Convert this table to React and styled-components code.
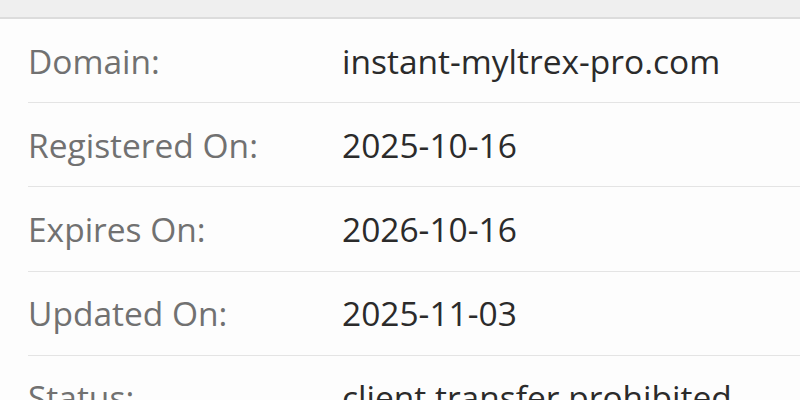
import React from "react";
import styled, { createGlobalStyle } from "styled-components";

const GlobalStyle = createGlobalStyle`
  html, body {
    margin: 0;
    padding: 0;
    background: #fdfdfd;
  }
  body {
    font-family: "Open Sans", "Noto Sans", sans-serif;
  }
`;

const Page = styled.div`
  width: 800px;
  height: 400px;
  overflow: hidden;
  background: #fdfdfd;
`;

const TopBar = styled.div`
  height: 17px;
  background: #efefef;
  border-bottom: 2px solid #dcdcdc;
`;

const Table = styled.div`
  padding-left: 28px;
  display: flex;
  flex-direction: column;
`;

const Row = styled.div`
  display: grid;
  grid-template-columns: 314px 1fr;
  align-items: center;
  height: 83.2px;
  border-bottom: 1.5px solid #e4e4e4;
`;

const Label = styled.div`
  font-size: 33.5px;
  color: #717171;
  white-space: nowrap;
`;

const Value = styled.div`
  font-size: 33.5px;
  color: #2b2b2b;
  white-space: nowrap;
`;

const rows = [
  ["Domain:", "instant-myltrex-pro.com"],
  ["Registered On:", "2025-10-16"],
  ["Expires On:", "2026-10-16"],
  ["Updated On:", "2025-11-03"],
  ["Status:", "client transfer prohibited"],
];

const App = () => {
  return (
    <Page>
      <GlobalStyle />
      <TopBar />
      <Table>
        {rows.map(([label, value]) => (
          <Row key={label}>
            <Label>{label}</Label>
            <Value>{value}</Value>
          </Row>
        ))}
      </Table>
    </Page>
  );
};

export default App;
